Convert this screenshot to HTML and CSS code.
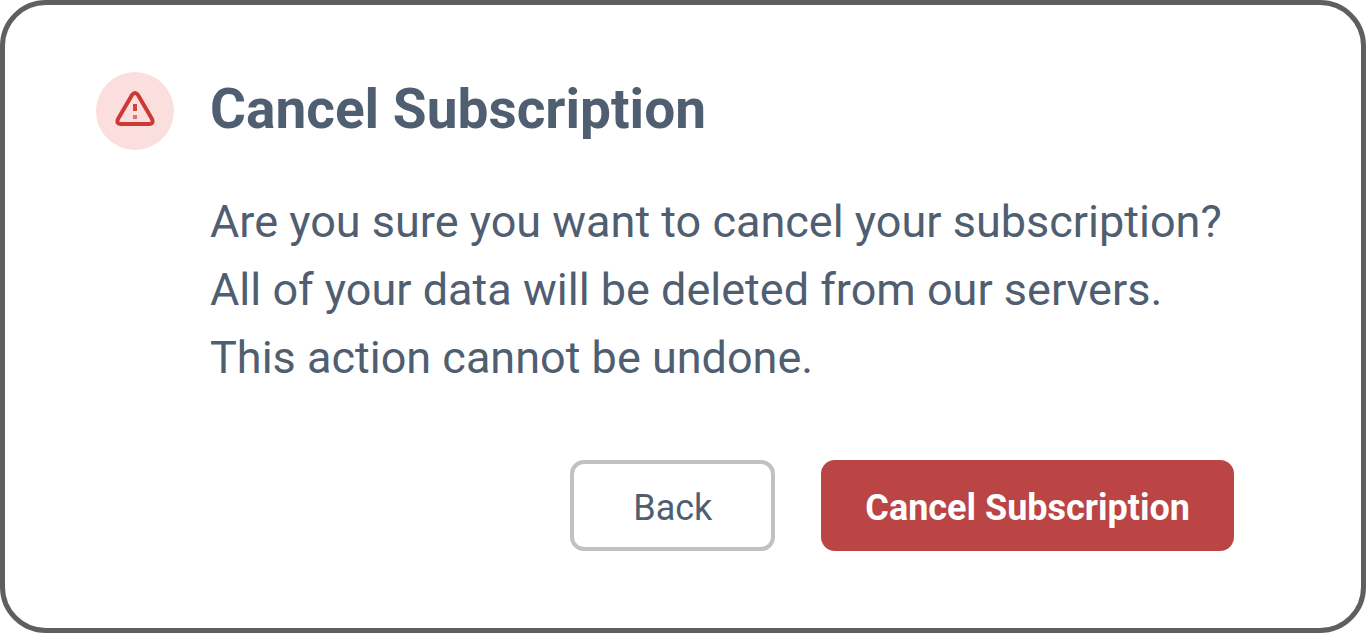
FILE: index.html
```html
<!DOCTYPE html>
<html lang="en">
<head>
<meta charset="utf-8">
<meta name="viewport" content="width=device-width, initial-scale=1">
<title>Cancel Subscription</title>
<link rel="stylesheet" href="styles.css">
</head>
<body>
<main class="dialog" role="alertdialog" aria-labelledby="title" aria-describedby="message">
  <span class="badge">
    <svg class="badge-icon" viewBox="0 0 40 36" aria-hidden="true">
      <path d="M17 4 3 28Q1 33 6 33H34Q39 33 37 28L23 4Q20 0 17 4Z" fill="none" stroke="#cd3a36" stroke-width="4" stroke-linejoin="round"/>
      <path d="M20 13V20" stroke="#cf4541" stroke-width="4"/>
      <path d="M20 24V28" stroke="#dc7572" stroke-width="4"/>
    </svg>
  </span>
  <h1 class="title" id="title">Cancel Subscription</h1>
  <div class="content">
    <p class="message" id="message">Are you sure you want to cancel your subscription? All of your data will be deleted from our servers. This action cannot be undone.</p>
    <div class="actions">
      <button class="button button-back" type="button">Back</button>
      <button class="button button-danger" type="button">Cancel Subscription</button>
    </div>
  </div>
</main>
</body>
</html>
```
FILE: styles.css
```css
* {
  box-sizing: border-box;
}

body {
  margin: 0;
  min-height: 100vh;
  display: flex;
  background: #fff;
  color: #4f5e71;
  font-family: Roboto, "Liberation Sans", sans-serif;
}

.dialog {
  flex: 1;
  display: grid;
  grid-template-columns: 78px 1fr;
  grid-template-rows: auto 1fr;
  column-gap: 36px;
  row-gap: 38px;
  padding: 67px 127px 76px 91px;
  border: 5px solid #5f5f5f;
  border-radius: 46px;
  background: #fff;
}

.badge {
  width: 78px;
  height: 78px;
  display: grid;
  place-items: center;
  padding-bottom: 4px;
  border-radius: 50%;
  background: #fbdfdf;
}

.badge-icon {
  width: 40px;
  height: 36px;
}

.title {
  align-self: center;
  margin: 0;
  padding-bottom: 4px;
  font-size: 55px;
  line-height: 64px;
  font-weight: 700;
}

.content {
  grid-column: 2;
}

.message {
  margin: 0;
  font-size: 45px;
  line-height: 68px;
}

.actions {
  display: flex;
  justify-content: flex-end;
  gap: 46px;
  margin-top: 68px;
}

.button {
  height: 91px;
  border-radius: 14px;
  font: inherit;
  font-size: 36px;
}

.button-back {
  padding: 4px 59px 0;
  border: 4px solid #c1c1c1;
  background: #fff;
  color: #4f5e71;
}

.button-danger {
  padding: 4px 44px 0;
  border: 0;
  background: #bb4444;
  color: #fff;
  font-weight: 700;
}
```
